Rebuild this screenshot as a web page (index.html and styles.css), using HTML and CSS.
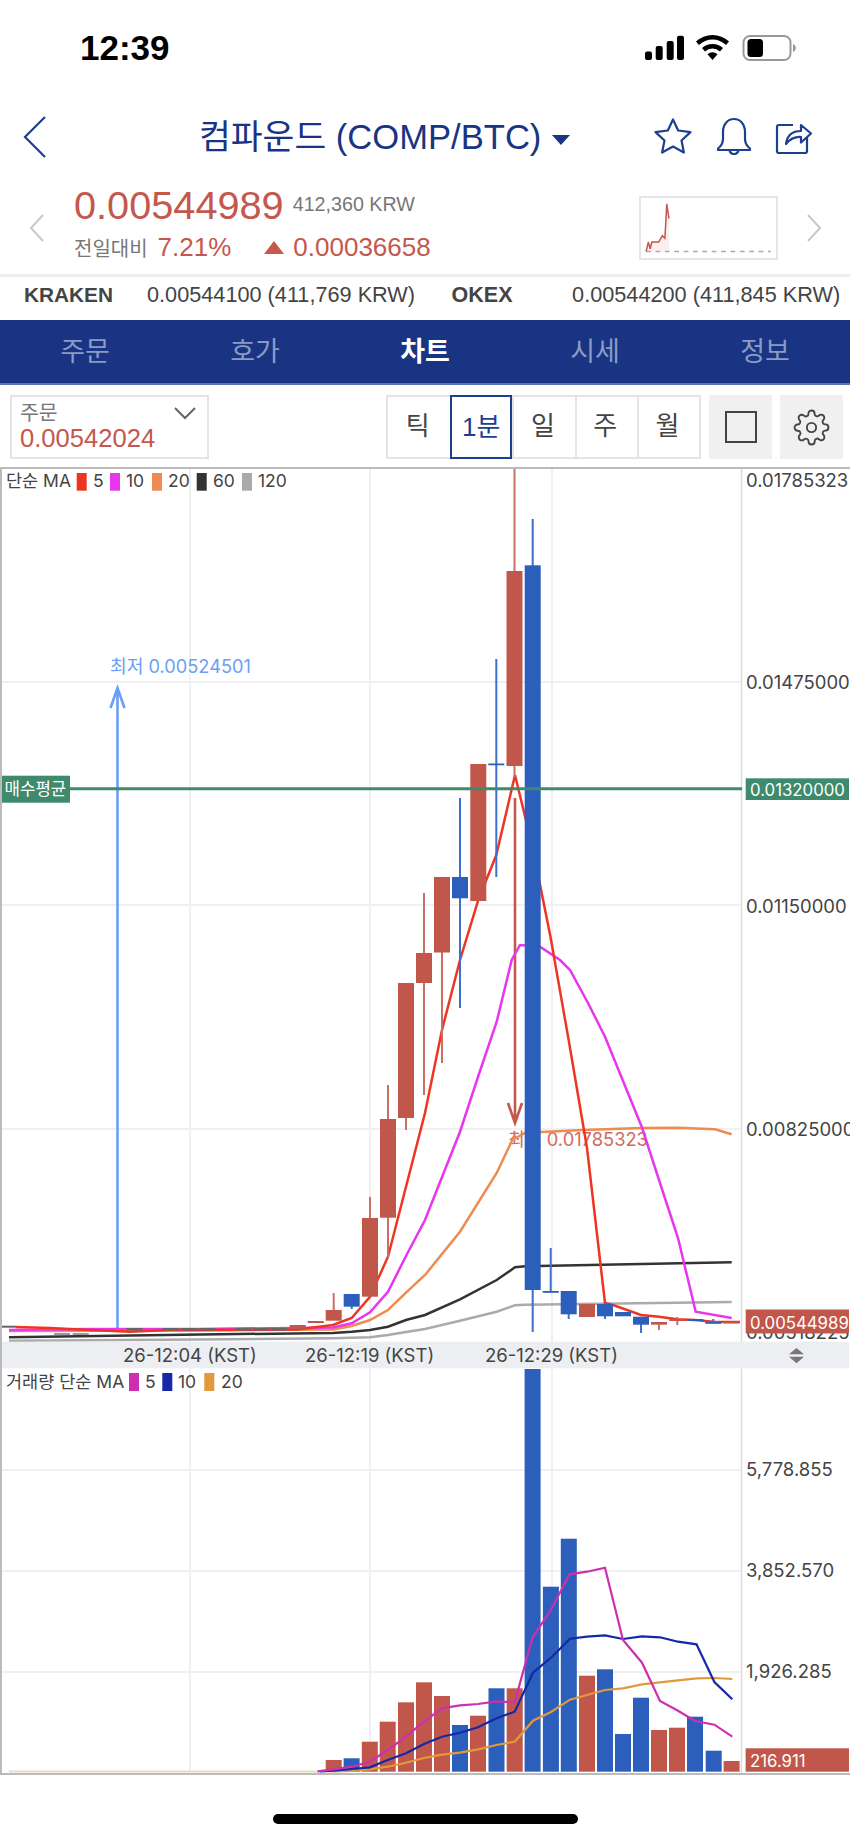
FILE: index.html
```html
<!DOCTYPE html>
<html lang="ko">
  <head>
    <meta charset="UTF-8" />
    <meta name="viewport" content="width=device-width, initial-scale=1.0" />
    <title>컴파운드 (COMP/BTC)</title>
    <link rel="stylesheet" href="styles.css">
  </head>
  <body>
    <div class="status">
      <span class="time">12:39</span>
      <svg class="status-icons" width="156" height="30" viewBox="642 33 156 30">
        <rect x="645" y="51.500" width="7" height="8.500" rx="2"/>
        <rect x="655.700" y="46" width="7" height="14" rx="2"/>
        <rect x="666.700" y="41" width="7" height="19" rx="2"/>
        <rect x="677" y="35.700" width="7" height="24.300" rx="2"/>
        <path d="M696 41.500a24 24 0 0 1 33 0l-3 3.400a19.500 19.500 0 0 0-27 0z"/>
        <path d="M702 48a15.500 15.500 0 0 1 21 0l-3 3.400a11 11 0 0 0-15 0z"/>
        <path d="M707.500 54.200a7.500 7.500 0 0 1 10 0l-5 5.800z"/>
        <rect class="batt" x="743.500" y="36" width="47" height="24" rx="6.500"/>
        <rect x="747.500" y="39" width="15.500" height="18" rx="3.500"/>
        <path class="cap" d="M793 44c2 .8 2.800 2.200 2.800 4s-.8 3.200-2.800 4z"/>
      </svg>
    </div>

    <header class="nav">
      <svg class="back" width="24" height="44" viewBox="0 0 24 44"><path d="M22 2 2 22l20 20"/></svg>
      <h1 class="title">컴파운드 (COMP/BTC)<span class="caret"></span></h1>
      <div class="nav-icons">
        <svg width="40" height="38" viewBox="0 0 40 38"><path d="M20 2.500l5.200 11 12.300 1.600-9 8.400 2.400 12-10.900-6-10.900 6 2.400-12-9-8.400 12.300-1.600z"/></svg>
        <svg width="38" height="38" viewBox="0 0 38 38"><path d="M3 31.500c3.200-2.500 5-5 5-9.500v-7C8 7.500 12.500 2 19 2s11 5.500 11 13v7c0 4.500 1.800 7 5 9.500V33H3zM14.500 33c.5 2.800 2.200 4 4.500 4s4-1.200 4.500-4"/></svg>
        <svg width="38" height="38" viewBox="0 0 38 38"><path d="M18 8H4a2 2 0 0 0-2 2v24a2 2 0 0 0 2 2h26a2 2 0 0 0 2-2V20"/><path d="M11 27c1-8 6-13 15-13V8l10 8.500-10 9V20c-7-.5-11 2-15 7z"/></svg>
      </div>
    </header>

    <section class="quote">
      <svg class="chev" width="16" height="28" viewBox="0 0 16 28"><path d="M14 1 2 14l12 13"/></svg>
      <div class="quote-main">
        <div class="price-row">
          <span class="price">0.00544989</span>
          <span class="krw">412,360 KRW</span>
        </div>
        <div class="change-row">
          <span class="change-label">전일대비</span>
          <span class="up">7.21%</span>
          <span class="tri"></span>
          <span class="up">0.00036658</span>
        </div>
      </div>
      <svg class="spark" width="139" height="64" viewBox="0 0 139 64">
        <path class="spark-fill" d="M3 57 5.300 47 7.300 54.300 9 47h7.300l4-6.700 2.700 2.700 2-36.700 2.300 15.700V57z"/>
        <path class="spark-base" d="M3 57h133"/>
        <path class="spark-line" d="M3 57 5.300 47 7.300 54.300 9 47h7.300l4-6.700 2.700 2.700 2-36.700 2.300 15.700"/>
      </svg>
      <svg class="chev" width="16" height="28" viewBox="0 0 16 28"><path d="M2 1l12 13L2 27"/></svg>
    </section>

    <section class="exchanges">
      <b class="ex-name">KRAKEN</b>
      <span class="ex-price">0.00544100 (411,769 KRW)</span>
      <b class="ex-name ex-second">OKEX</b>
      <span class="ex-price">0.00544200 (411,845 KRW)</span>
    </section>

    <nav class="tabs">
      <a>주문</a>
      <a>호가</a>
      <a class="on">차트</a>
      <a>시세</a>
      <a>정보</a>
    </nav>

    <section class="toolbar">
      <div class="order">
        <span class="order-label">주문</span>
        <span class="order-value">0.00542024</span>
        <svg class="order-arrow" width="24" height="14" viewBox="0 0 24 14"><path d="M2 2l10 10L22 2"/></svg>
      </div>
      <div class="segments">
        <span>틱</span>
        <span class="on">1분</span>
        <span>일</span>
        <span>주</span>
        <span>월</span>
      </div>
      <div class="tool"><i class="square"></i></div>
      <div class="tool">
        <svg class="gear" width="37" height="37" viewBox="0 0 24 24">
          <circle cx="12" cy="12" r="3"/>
          <path d="M19.400 15a1.650 1.650 0 0 0 .33 1.820l.06.06a2 2 0 0 1 0 2.830 2 2 0 0 1-2.830 0l-.06-.06a1.650 1.650 0 0 0-1.820-.33 1.650 1.650 0 0 0-1 1.510V21a2 2 0 0 1-2 2 2 2 0 0 1-2-2v-.09A1.650 1.650 0 0 0 9 19.400a1.650 1.650 0 0 0-1.820.33l-.06.06a2 2 0 0 1-2.830 0 2 2 0 0 1 0-2.830l.06-.06a1.650 1.650 0 0 0 .33-1.820 1.650 1.650 0 0 0-1.510-1H3a2 2 0 0 1-2-2 2 2 0 0 1 2-2h.09A1.650 1.650 0 0 0 4.600 9a1.650 1.650 0 0 0-.33-1.820l-.06-.06a2 2 0 0 1 0-2.830 2 2 0 0 1 2.830 0l.06.06a1.650 1.650 0 0 0 1.820.33H9a1.650 1.650 0 0 0 1-1.510V3a2 2 0 0 1 2-2 2 2 0 0 1 2 2v.09a1.650 1.650 0 0 0 1 1.510 1.650 1.650 0 0 0 1.820-.33l.06-.06a2 2 0 0 1 2.830 0 2 2 0 0 1 0 2.830l-.06.06a1.650 1.650 0 0 0-.33 1.820V9a1.650 1.650 0 0 0 1.510 1H21a2 2 0 0 1 2 2 2 2 0 0 1-2 2h-.09a1.650 1.650 0 0 0-1.510 1z"/>
        </svg>
      </div>
    </section>

    <!-- chart uses page coordinates, viewBox starts at the chart's top -->
    <svg class="chart" width="850" height="1309" viewBox="0 467 850 1309">
      <!-- grid -->
      <g class="grid">
        <path d="M190 469V1342M370 469V1342M552 469V1342M2 682H742M2 905H742M2 1129H742"/>
        <path d="M190 1368V1772M370 1368V1772M552 1368V1772M2 1470H742M2 1571H742M2 1672H742"/>
      </g>
      <path class="axis" d="M741.500 469V1342M741.500 1368V1773"/>

      <text class="ax" x="746" y="486.500">0.01785323</text>
      <text class="ax" x="746" y="689">0.01475000</text>
      <text class="ax" x="746" y="912.500">0.01150000</text>
      <text class="ax" x="746" y="1136">0.00825000</text>
      <text class="ax" x="746" y="1339">0.00518225</text>

      <!-- high / low markers -->
      <text class="low-text" x="110" y="673">최저 0.00524501</text>
      <path class="low-arrow" d="M117.500 1328V688M110.500 708l7-20 7 20"/>
      <text class="high-text" x="508" y="1146">최고 0.01785323</text>
      <path class="high-arrow" d="M515 798V1122M508 1103l7 20 7-20"/>

      <!-- moving averages -->
      <polyline class="ma" stroke="#aaaaaa" points="9,1340.700 200,1339.500 333,1338.300 370,1337.300 388,1335 406,1332 425,1329 460,1320.700 496.700,1311.700 515,1305.300 525,1304.700 731.700,1302"/>
      <polyline class="ma" stroke="#333333" points="9,1337.300 200,1334.500 333,1333 351.700,1331.700 370,1330 388,1326.700 406,1320 425,1315 460,1299.300 496.700,1280 515,1267.300 525,1266.300 731.700,1262.300"/>
      <polyline class="ma" stroke="#ef8a50" points="9,1331 200,1330.500 333,1329.500 351.700,1326 370,1320 388,1310 406,1292.700 425,1275 460,1231.700 496.700,1173 512.300,1140 525,1133 541.700,1132 583,1130 641.700,1128 678,1127.700 715,1129.300 731.700,1134.300"/>
      <polyline class="ma" stroke="#e835ee" points="9,1330 90,1329 200,1329 333,1327.500 351.700,1323.300 370,1312.300 388,1291.700 406,1256 425,1220 460,1131.700 478.300,1076 496.700,1021.700 511.700,960 520,945 540,946.700 560,960 570,970 588,1003 605,1036.700 641.700,1126.700 660,1183 678,1238 695.700,1311.700 731.700,1318"/>
      <polyline class="ma" stroke="#ee3524" points="16,1327 50,1328 90,1330 130,1331.700 170,1330 297,1329.500 333,1325 351.700,1318 370,1296.700 388,1256.700 406,1186.700 425,1113 442,1030 460,960 478.300,900 496.300,855 515,775 532.700,848 550.700,938 569,1042 587,1148 605,1303 613,1305 641,1315 659,1316.700 677,1319.300 695,1320 713,1321.700 740,1322"/>

      <!-- flat candles on the left -->
      <g class="flat">
        <rect x="2" y="1325.700" width="14" height="2"/>
        <rect x="126.500" y="1328" width="16" height="2.500"/>
        <rect x="162.700" y="1328" width="16" height="2.500"/>
        <rect x="181" y="1328" width="16" height="2.500"/>
        <rect x="199" y="1328" width="16" height="2.500"/>
        <rect x="235" y="1328" width="16" height="2.500"/>
        <rect x="253" y="1328" width="16" height="2.500"/>
        <rect x="271" y="1328" width="16" height="2.500"/>
        <rect class="flat-lt" x="54" y="1333" width="16" height="2"/>
        <rect class="flat-lt" x="72.700" y="1333" width="16" height="2"/>
      </g>

      <!-- candles -->
      <g class="red">
        <rect x="289.700" y="1325" width="16" height="4"/>
        <rect x="307.800" y="1321" width="16" height="2"/>
        <path d="M333.700 1293v18"/>
        <rect x="325.700" y="1310" width="16" height="10.700"/>
        <path d="M370 1197v22"/>
        <rect x="362" y="1218" width="16" height="78.700"/>
        <path d="M388 1085v35M388 1217v40"/>
        <rect x="380" y="1119" width="16" height="98.700"/>
        <path d="M406 1117v13"/>
        <rect x="398" y="983" width="16" height="135"/>
        <path d="M424 893v60M424 982v113"/>
        <rect x="416" y="953" width="16" height="30"/>
        <path d="M442 952v111"/>
        <rect x="434" y="877" width="16" height="75.500"/>
        <rect x="470.300" y="764" width="16" height="137"/>
        <path d="M514.500 468v103M514.500 765v12"/>
        <rect x="506.500" y="571" width="16" height="195"/>
        <rect x="579" y="1304" width="16" height="13"/>
        <rect x="651" y="1322" width="16" height="2.700"/>
        <path d="M659 1324v6M677.300 1317v8"/>
        <rect x="669.300" y="1319" width="16" height="2"/>
        <rect x="723.300" y="1321.500" width="16" height="2"/>
      </g>
      <g class="blue">
        <path d="M351.700 1306v3"/>
        <rect x="343.700" y="1294" width="16" height="12.700"/>
        <path d="M460 798v210"/>
        <rect x="452" y="877" width="16" height="21.300"/>
        <path d="M496.300 659v218"/>
        <rect x="488.300" y="763.500" width="16" height="1.800"/>
        <path d="M532.700 519v47M532.700 1290v42"/>
        <rect x="524.700" y="565.300" width="16" height="724.700"/>
        <path d="M550.700 1248v44"/>
        <rect x="542.700" y="1291" width="16" height="1.800"/>
        <path d="M568.700 1313v6"/>
        <rect x="560.700" y="1291" width="16" height="23.300"/>
        <path d="M605 1316v3"/>
        <rect x="597" y="1304" width="16" height="12.300"/>
        <rect x="615" y="1312" width="16" height="4.300"/>
        <path d="M641 1324v9"/>
        <rect x="633" y="1316.700" width="16" height="8"/>
        <rect x="687.300" y="1319" width="16" height="2"/>
        <path d="M713.300 1319v3"/>
        <rect x="705.300" y="1322" width="16" height="1.800"/>
      </g>

      <!-- average buy price -->
      <path class="avg-line" d="M2 788.700H742"/>
      <rect class="avg" x="2" y="775.700" width="68" height="27"/>
      <text class="badge-txt" x="4.500" y="795">매수평균</text>
      <rect class="avg" x="745.700" y="778.300" width="103.300" height="21.700"/>
      <text class="badge-txt" x="750" y="795.500">0.01320000</text>

      <rect class="now" x="745.700" y="1309.500" width="103.300" height="24"/>
      <text class="badge-txt" x="750" y="1328.500">0.00544989</text>

      <!-- legend -->
      <text class="lbl" x="6" y="487">단순 MA</text>
      <rect x="76.700" y="473" width="10" height="17.700" fill="#ee3524"/>
      <text class="lbl" x="93" y="487">5</text>
      <rect x="110" y="473" width="10" height="17.700" fill="#e835ee"/>
      <text class="lbl" x="126" y="487">10</text>
      <rect x="152" y="473" width="10" height="17.700" fill="#ef8a50"/>
      <text class="lbl" x="168" y="487">20</text>
      <rect x="196.700" y="473" width="10" height="17.700" fill="#333333"/>
      <text class="lbl" x="213" y="487">60</text>
      <rect x="242" y="473" width="10" height="17.700" fill="#aaaaaa"/>
      <text class="lbl" x="258" y="487">120</text>

      <!-- time band -->
      <rect class="band" x="2" y="1341.700" width="847" height="26.600"/>
      <text class="ax" x="123" y="1362">26-12:04 (KST)</text>
      <text class="ax" x="305" y="1362">26-12:19 (KST)</text>
      <text class="ax" x="485" y="1362">26-12:29 (KST)</text>
      <path class="updown" d="M796.500 1348l7.500 6.300h-15zM796.500 1363.300l7.500-6.500h-15z"/>

      <!-- volume -->
      <text class="lbl" x="6" y="1388">거래량 단순 MA</text>
      <rect x="129" y="1373" width="10" height="18" fill="#cd2fb0"/>
      <text class="lbl" x="145" y="1388">5</text>
      <rect x="162.300" y="1373" width="10" height="18" fill="#1428a8"/>
      <text class="lbl" x="178" y="1388">10</text>
      <rect x="204.300" y="1373" width="10" height="18" fill="#e09a3c"/>
      <text class="lbl" x="221" y="1388">20</text>

      <text class="ax" x="746" y="1476">5,778.855</text>
      <text class="ax" x="746" y="1577">3,852.570</text>
      <text class="ax" x="746" y="1678">1,926.285</text>

      <path class="vol-base" d="M9 1771.500H333"/>
      <g class="red">
        <rect x="325.700" y="1760" width="16" height="11.700"/>
        <rect x="361.800" y="1741.700" width="16" height="30"/>
        <rect x="379.700" y="1721.700" width="16" height="50"/>
        <rect x="398" y="1702.300" width="16" height="69.400"/>
        <rect x="416" y="1682.300" width="16" height="89.400"/>
        <rect x="434" y="1696" width="16" height="75.700"/>
        <rect x="470" y="1715.700" width="16" height="56"/>
        <rect x="506.700" y="1688.300" width="16" height="83.400"/>
        <rect x="579" y="1675.700" width="16" height="96"/>
        <rect x="651" y="1730" width="16" height="41.700"/>
        <rect x="669" y="1727.700" width="16" height="44"/>
        <rect x="723.600" y="1761" width="16" height="10.700"/>
      </g>
      <g class="blue">
        <rect x="343.600" y="1758.300" width="16" height="13.400"/>
        <rect x="452" y="1725" width="16" height="46.700"/>
        <rect x="488.500" y="1688.300" width="16" height="83.400"/>
        <rect x="524.600" y="1369" width="16" height="402.700"/>
        <rect x="542.900" y="1586.700" width="16" height="185"/>
        <rect x="560.800" y="1538.700" width="16" height="233"/>
        <rect x="597" y="1669.300" width="16" height="102.400"/>
        <rect x="615" y="1734" width="16" height="37.700"/>
        <rect x="633" y="1697.700" width="16" height="74"/>
        <rect x="687" y="1716.700" width="16" height="55"/>
        <rect x="705.700" y="1750.700" width="16" height="21"/>
      </g>
      <polyline class="ma vol-ma" stroke="#e09a3c" points="333,1771.500 351.600,1771 369.800,1769.300 387.700,1766.700 406,1762.700 424,1758 442,1754.700 460,1752.700 478,1749.300 496.500,1745 514.700,1741.700 533,1720.700 551,1712 570,1699.700 587,1695 605,1690 623,1688.300 642,1684.300 660,1682.300 678,1680.300 696.500,1678.300 714.400,1678 732.300,1679"/>
      <polyline class="ma vol-ma" stroke="#1428a8" points="320,1771.500 333.700,1770.700 351.600,1769 369.800,1767.300 387.700,1760 406,1753.300 424,1744 442,1736.700 460,1732.700 478,1727.300 496.500,1718.300 514.700,1711.700 533,1672.700 551,1657.700 570,1638.700 587,1636.700 605,1635.300 623,1639 642,1636.300 660,1637.300 678,1641.700 696.500,1644.300 714.400,1682 732.300,1699.300"/>
      <polyline class="ma vol-ma" stroke="#cd2fb0" points="317.500,1771.300 333.700,1769.300 351.700,1766.700 369.800,1761.700 387.700,1750 406,1736.700 424,1721.700 442,1708.300 460,1705.300 478,1704 496.500,1701.300 514.700,1702.300 532.600,1637.300 550.900,1610 569.500,1574.300 587,1571.700 605,1567.700 623,1640 642,1662.700 660,1701 678,1710.700 695,1721 714.400,1724.700 732.300,1736.700"/>

      <rect class="now" x="745.600" y="1748.300" width="103.400" height="23.400"/>
      <text class="badge-txt" x="750" y="1767">216.911</text>

      <!-- frame -->
      <path class="frame" d="M850 468H1V1774H850"/>
    </svg>

    <div class="home"><span></span></div>
  </body>
</html>
```

FILE: styles.css
```css
* {
  box-sizing: border-box;
}

body {
  margin: 0;
  width: 850px;
  background: #fff;
  color: #444;
  font-family: "Liberation Sans", "Noto Sans CJK KR", sans-serif;
}

svg {
  display: block;
}

.status {
  height: 96px;
  position: relative;
}

.time {
  position: absolute;
  left: 80px;
  top: 28px;
  font-size: 35px;
  font-weight: 700;
  line-height: 40px;
  color: #000;
}

.status-icons {
  position: absolute;
  left: 642px;
  top: 33px;
}

.batt {
  fill: none;
  stroke: #999;
  stroke-width: 2;
}

.cap {
  fill: #999;
}

.nav {
  height: 82px;
  display: flex;
  align-items: center;
  padding-left: 23px;
  position: relative;
}

.back path {
  fill: none;
  stroke: #1e3f8f;
  stroke-width: 2.200;
}

.title {
  position: absolute;
  left: 199px;
  top: 0;
  margin: 0;
  line-height: 82px;
  font-size: 34.600px;
  font-weight: 400;
  color: #183482;
  white-space: nowrap;
}

.caret {
  display: inline-block;
  margin-left: 11px;
  vertical-align: 4px;
  border-left: 9px solid transparent;
  border-right: 9px solid transparent;
  border-top: 10px solid #183482;
}

.nav-icons {
  margin: -3px 37px 0 auto;
  display: flex;
  align-items: center;
  gap: 22px;
}

.nav-icons path {
  fill: none;
  stroke: #1e3f8f;
  stroke-width: 2.200;
  stroke-linejoin: round;
}

.quote {
  height: 99px;
  display: flex;
  align-items: flex-start;
  padding: 0 28px 0 29px;
  border-bottom: 3px solid #eeeeee;
}

.chev {
  flex: none;
  margin-top: 36px;
}

.chev path {
  fill: none;
  stroke: #c8c8c8;
  stroke-width: 2;
}

.quote-main {
  margin-left: 29px;
  flex: 1;
}

.price-row {
  display: flex;
  align-items: center;
  gap: 9px;
  height: 46px;
  margin-top: 4px;
}

.price {
  font-size: 39.700px;
  color: #c4584c;
}

.krw {
  font-size: 19.700px;
  color: #777;
  margin-top: -2px;
}

.change-row {
  display: flex;
  align-items: center;
  height: 36px;
  margin-top: 1px;
}

.change-label {
  font-size: 20px;
  color: #777;
  margin-right: 10px;
}

.up {
  font-size: 26px;
  color: #c4584c;
}

.tri {
  margin: 0 9px 0 33px;
  border-left: 10px solid transparent;
  border-right: 10px solid transparent;
  border-bottom: 13px solid #c4584c;
}

.spark {
  flex: none;
  margin: 18px 28px 0 0;
  border: 2px solid #e6e6e6;
}

.spark-line {
  fill: none;
  stroke: #c4584c;
  stroke-width: 1.600;
}

.spark-fill {
  fill: #fbeeec;
}

.spark-base {
  stroke: #aaa;
  stroke-width: 1.500;
  stroke-dasharray: 5 5;
}

.exchanges {
  height: 43px;
  display: flex;
  padding: 0 0 0 24px;
  line-height: 36px;
  font-size: 21.700px;
  white-space: nowrap;
}

.ex-name {
  width: 123px;
  font-size: 20.800px;
}

.ex-second {
  width: 120.500px;
  margin-left: 36.500px;
  font-size: 21.500px;
}

.tabs {
  height: 65px;
  display: grid;
  grid-template-columns: repeat(5, 1fr);
  background: #183482;
  border-bottom: 2px solid #5a74b8;
}

.tabs a {
  text-align: center;
  line-height: 65px;
  font-size: 27px;
  color: #8c9bc6;
}

.tabs a.on {
  color: #fff;
  font-weight: 700;
}

.toolbar {
  height: 82px;
  display: flex;
  align-items: flex-start;
  padding: 10px 7px 0 10px;
}

.order {
  width: 199px;
  height: 64px;
  border: 2px solid #e4e4e4;
  padding: 5px 0 0 8px;
  position: relative;
  display: flex;
  flex-direction: column;
}

.order-label {
  font-size: 20.500px;
  line-height: 22px;
  color: #777;
}

.order-value {
  font-size: 25.600px;
  line-height: 28px;
  color: #c4584c;
}

.order-arrow {
  position: absolute;
  right: 10px;
  top: 9px;
}

.order-arrow path {
  fill: none;
  stroke: #666;
  stroke-width: 2;
}

.segments {
  width: 315px;
  height: 64px;
  margin-left: 177px;
  border: 2px solid #e4e4e4;
  display: grid;
  grid-template-columns: repeat(5, 1fr);
}

.segments span {
  text-align: center;
  line-height: 58px;
  padding-right: 3px;
  font-size: 26px;
  color: #444;
  border-left: 2px solid #e4e4e4;
}

.segments span:first-child {
  border-left: none;
}

.segments span.on {
  margin: -2px 0;
  padding-right: 0;
  line-height: 60px;
  border: 2px solid #1e3f8f;
  color: #1e3f8f;
}

.tool {
  width: 63px;
  height: 64px;
  margin-left: 8px;
  background: #f0f0f0;
  display: flex;
  align-items: center;
  justify-content: center;
}

.square {
  width: 32px;
  height: 32px;
  border: 2px solid #444;
}

.gear {
  fill: none;
  stroke: #444;
  stroke-width: 1.200;
  stroke-linejoin: round;
}

.chart text {
  font-family: Inter, "Noto Sans CJK KR", sans-serif;
  font-size: 17.500px;
}

.grid path {
  fill: none;
  stroke: #f0f0f2;
  stroke-width: 2;
}

.axis {
  fill: none;
  stroke: #dcdcdc;
  stroke-width: 1.500;
}

.lbl {
  fill: #444;
}

.chart .ax {
  fill: #444;
  font-size: 18.500px;
}

.low-arrow {
  fill: none;
  stroke: #6a9ff5;
  stroke-width: 2.600;
}

.chart .low-text {
  fill: #6a9ff5;
  font-size: 18.200px;
}

.high-arrow {
  fill: none;
  stroke: #c4584c;
  stroke-width: 2.600;
}

.chart .high-text {
  fill: #cf6b5e;
  font-size: 18.300px;
}

.ma {
  fill: none;
  stroke-width: 2.500;
}

.vol-ma {
  stroke-width: 2.200;
}

.flat rect {
  fill: #666;
}

.flat .flat-lt {
  fill: #999;
}

.red rect {
  fill: #c1574b;
}

.red path {
  stroke: #cb6f64;
  stroke-width: 2;
  fill: none;
}

.blue rect {
  fill: #2b5fbb;
}

.blue path {
  stroke: #3d6fcc;
  stroke-width: 2;
  fill: none;
}

.avg-line {
  stroke: #3f8a6d;
  stroke-width: 3;
}

.avg {
  fill: #3f8a6d;
}

.now {
  fill: #c1574b;
}

.chart .badge-txt {
  fill: #fff;
  font-size: 16.800px;
}

.band {
  fill: #eceef2;
}

.updown {
  fill: #777;
}

.vol-base {
  stroke: #e6dcc0;
  stroke-width: 2;
}

.frame {
  fill: none;
  stroke: #bbbbbb;
  stroke-width: 2;
}

.home {
  height: 64px;
  position: relative;
}

.home span {
  position: absolute;
  left: 273px;
  top: 38px;
  width: 305px;
  height: 10px;
  border-radius: 5px;
  background: #000;
}
```
